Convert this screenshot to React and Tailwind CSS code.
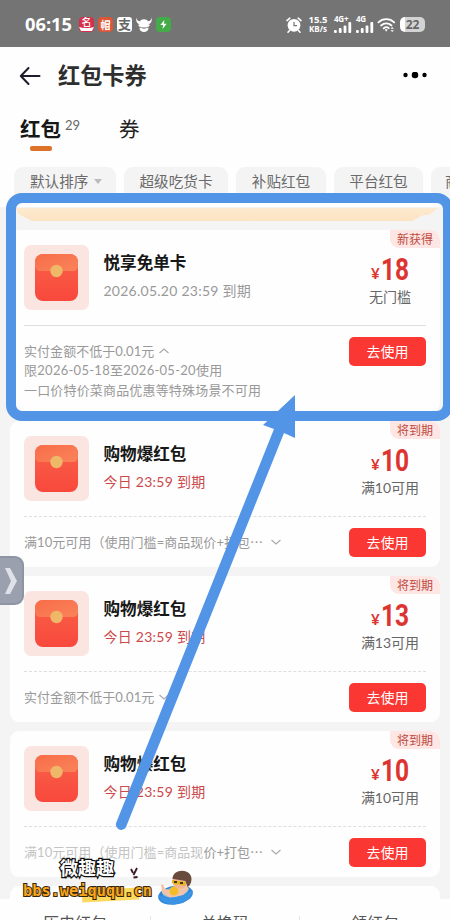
import React from 'react';

const FILTERS = [
    { label: '超级吃货卡', cls: 'w-[104px]' },
    { label: '补贴红包', cls: 'w-[90px]' },
    { label: '平台红包', cls: 'w-[89px]' },
];

const COUPONS = [
    {
        id: 1, tag: '新获得', title: '悦享免单卡', expire: '2026.05.20 23:59 到期', price: '18', limit: '无门槛',
        note: '实付金额不低于0.01元', open: true, cardCls: 'h-[182px]',
        extra: [
            { text: '限2026-05-18至2026-05-20使用', cls: 'tracking-[0.27px]' },
            { text: '一口价特价菜商品优惠等特殊场景不可用', cls: 'tracking-[0.17px]' },
        ],
    },
    {
        id: 2, tag: '将到期', title: '购物爆红包', expire: '今日 23:59 到期', urgent: true, price: '10', limit: '满10可用',
        note: '满10元可用（使用门槛=商品现价+打包⋯', long: true, cardCls: 'h-[146px]',
    },
    {
        id: 3, tag: '将到期', title: '购物爆红包', expire: '今日 23:59 到期', urgent: true, price: '13', limit: '满13可用',
        note: '实付金额不低于0.01元', cardCls: 'h-[146px]',
    },
    {
        id: 4, tag: '将到期', title: '购物爆红包', expire: '今日 23:59 到期', urgent: true, price: '10', limit: '满10可用',
        faded: '满10元可用（使用门槛=商品现', note: '价+打包⋯', long: true, cardCls: 'h-[146px]',
    },
];

const Signal = () => (
    <svg viewBox="0 0 18 11" className="w-[18px] h-[11px]" fill="#fff">
        <rect x="0" y="8" width="2.8" height="3" rx="1" />
        <rect x="4.8" y="6" width="2.8" height="5" rx="1" />
        <rect x="9.6" y="3.5" width="2.8" height="7.5" rx="1" />
        <rect x="14.4" y="0" width="2.8" height="11" rx="1" />
    </svg>
);

const StatusBar = () => (
    <div className="h-[47px] shrink-0 bg-[#747474] flex items-center pt-[2px] pl-[25px] pr-[25px] text-white">
        <span className="w-[54px] text-[18.3px] leading-none font-bold font-['Open_Sans',sans-serif]">06:15</span>
        <div className="flex items-center gap-[4px]">
            <div className="w-[15px] h-[15px] rounded-[4px] bg-[#d62f4c] flex flex-col items-center overflow-hidden">
                <span className="text-[10px] leading-[10px] font-medium">名</span>
                <svg viewBox="0 0 15 4" className="w-[15px] h-[4px]"><path d="M0 0 4 1h7l4-1-2 4H2z" fill="#fff" /></svg>
            </div>
            <div className="w-[15px] h-[15px] rounded-[4px] bg-[#dc5638] flex items-center justify-center text-[10px] leading-none font-bold">帽</div>
            <div className="w-[15px] h-[15px] rounded-[3px] bg-white text-[#666] flex items-center justify-center text-[13px] leading-none font-bold">支</div>
            <svg viewBox="0 0 16 16" className="w-[16px] h-[16px]" fill="#fff">
                <path d="M.5.5C.5 3 2 4 4 4.200 5 1.500 11 1.500 12 4.200 14 4 15.500 3 15.500.5 16.500 4.500 14.500 7 12.500 7.200L14 8c-1 2-3 2.500-6 2.500S3 10 2 8l1.500-.8C1.500 7-.5 4.500.5.5z" />
                <path d="M3.500 10.500c3 1.500 6 1.500 9 0 .5 6-9.500 6-9 0z" />
            </svg>
            <div className="w-[15px] h-[15px] rounded-[4px] bg-[#43ab47] flex items-center justify-center">
                <svg viewBox="0 0 10 10" className="w-[9px] h-[9px]" fill="#fff"><path d="M6 0 1.5 5.5H4.5L4 10 8.5 4.2H5.5z" /></svg>
            </div>
        </div>
        <div className="ml-auto flex items-center">
            <svg viewBox="0 0 16 16" className="w-[16px] h-[16px]">
                <circle cx="8" cy="8.3" r="6.4" fill="#fff" />
                <path d="M1 3.6 3.8 1.2M15 3.6 12.2 1.2M3.5 13.5 2 15.2M12.5 13.5 14 15.2" stroke="#fff" strokeWidth="1.6" strokeLinecap="round" />
                <path d="M8 5v3.6h3" fill="none" stroke="#747474" strokeWidth="1.2" />
            </svg>
            <div className="ml-[6px] w-[20px] flex flex-col items-center font-bold font-['Open_Sans',sans-serif]">
                <span className="text-[9.5px] leading-[8px]">15.5</span>
                <span className="text-[8px] leading-[9px]">KB/s</span>
            </div>
            <div className="ml-[6px] flex flex-col font-bold text-[8px] leading-[7px] tracking-[-0.2px] font-['Open_Sans',sans-serif]">
                <span className="-mt-[2px]">4G+</span>
                <Signal />
            </div>
            <div className="ml-[4px] flex flex-col font-bold text-[8px] leading-[7px] tracking-[-0.2px] font-['Open_Sans',sans-serif]">
                <span className="-mt-[2px]">4G</span>
                <Signal />
            </div>
            <svg viewBox="0 0 20 16" className="ml-[3px] w-[19px] h-[16px]" fill="none" stroke="#fff" strokeWidth="1.9" strokeLinecap="round">
                <path d="M1.5 5.2c4.6-4.4 12-4.4 16.6 0M4.3 8.5c3.2-3 7.8-3 11 0M7 11.5c1.8-1.6 3.8-1.6 5.4-.2" />
                <path d="M8 12.6h3.4L9.7 15z" fill="#fff" stroke="none" />
                <path d="M14.2 12 16 10l1.8 2zM14.2 13.4 16 15.4l1.8-2z" fill="#fff" stroke="none" />
            </svg>
            <div className="ml-[4px] w-[25px] h-[15px] rounded-[5px] bg-gradient-to-r from-white from-20% to-[#d3d3d3] to-20% flex items-center justify-center text-[#666] text-[12px] leading-none font-bold font-['Open_Sans',sans-serif]">22</div>
        </div>
    </div>
);

const Envelope = () => (
    <div className="w-[65px] h-[65px] shrink-0 rounded-[7px] bg-[#fae5e1] flex items-center justify-center">
        <svg viewBox="0 0 43 47" className="w-[43px] h-[47px]">
            <defs>
                <linearGradient id="body" x1="0" y1="0" x2="0" y2="1">
                    <stop offset="0" stopColor="#f9624a" />
                    <stop offset="1" stopColor="#f8483c" />
                </linearGradient>
                <linearGradient id="flap" x1="0" y1="0" x2="1" y2="1">
                    <stop offset="0" stopColor="#f86d48" />
                    <stop offset="1" stopColor="#f9835a" />
                </linearGradient>
            </defs>
            <rect width="43" height="47" rx="8" fill="url(#body)" />
            <path d="M0 8a8 8 0 0 1 8-8h27a8 8 0 0 1 8 8v3c0 4-2 6-6 6H6c-4 0-6-2-6-6z" fill="url(#flap)" />
            <circle cx="21.5" cy="17" r="6.2" fill="#efb868" />
        </svg>
    </div>
);

const CouponCard = ({ item }) => (
    <div className={`relative shrink-0 bg-[#fefefe] rounded-[9px] pl-[14px] pr-[14px] pt-[15px] overflow-hidden ${item.cardCls}`}>
        <div className="absolute right-0 top-0 h-[18px] w-[50px] rounded-bl-[9px] rounded-tr-[9px] bg-[#fde6e3] text-[#c04a40] text-[12px] leading-[19px] text-center">{item.tag}</div>
        <div className="flex h-[65px]">
            <Envelope />
            <div className="ml-[14.500px] flex flex-col">
                <div className="mt-[6px] text-[16.6px] leading-[24px] font-bold text-[#171717]">{item.title}</div>
                <div className={`mt-[6px] text-[14px] leading-[20px] tracking-[0.25px] ${item.urgent ? 'text-[#cd484a]' : 'text-[#999]'}`}>{item.expire}</div>
            </div>
            <div className="ml-auto w-[72px] flex flex-col items-center">
                <div className="mt-[10px] h-[30px] w-[38px] flex items-end text-[#dc3430]">
                    <span className="w-[10px] text-[15px] leading-[24px] font-bold">¥</span>
                    <span className="ml-[1px] w-[28px] origin-left scale-x-[0.79] text-[31px] leading-[30px] font-bold font-['Roboto',sans-serif]">{item.price}</span>
                </div>
                <div className="mt-[2px] text-[14px] leading-[20px] text-[#666]">{item.limit}</div>
            </div>
        </div>
        <div className={`mt-[15px] border-t border-[#dedede] ${item.open ? '' : 'border-dashed'}`} />
        <div className="mt-[11px] flex justify-between">
            <div className="pt-[4px] text-[13px] leading-[20px] tracking-[0.05px] text-[#999] whitespace-nowrap">
                <div className="flex items-center">
                    {item.faded && <span className="text-[#c4c4c4]">{item.faded}</span>}
                    <span>{item.note}</span>
                    <svg viewBox="0 0 10 6" className={`w-[10px] h-[6px] ${item.long ? 'ml-[8px]' : 'ml-[5px]'}`} fill="none" stroke="#aaa" strokeWidth="1.2">
                        <path d={item.open ? 'M.5 5 5 1l4.500 4' : 'M.5 1 5 5l4.500-4'} />
                    </svg>
                </div>
                {item.extra && item.extra.map((line, i) => <div key={i} className={`leading-[19.500px] ${line.cls}`}>{line.text}</div>)}
            </div>
            <button className="w-[77px] h-[29px] shrink-0 rounded-[5px] bg-[#fb3733] text-white text-[14px] leading-[28px]">去使用</button>
        </div>
    </div>
);

// blue frame and arrow drawn over the list
const Markup = () => (
    <>
        <div className="absolute left-[6px] top-[193px] w-[447px] h-[228px] rounded-[16px] border-[10px] border-[#5294e6]" />
        <svg viewBox="0 0 450 920" className="absolute left-0 top-0 w-[450px] h-[920px]">
            <path d="M295 395 263 425l11 4L116.500 822a5.200 5.200 0 0 0 9.500 5L284 433l11 5z" fill="#5294e6" />
        </svg>
    </>
);

const Watermark = () => (
    <div className="absolute left-[23px] top-[855px] w-[175px] h-[60px]">
        <div className="absolute left-[59px] top-[34px] w-[57px] h-[12px] bg-[#fbd95e] -rotate-3" />
        <div className="absolute left-[37px] top-[2px] text-[18px] leading-[22px] font-bold text-white whitespace-nowrap [-webkit-text-stroke:2.5px_#111] [paint-order:stroke_fill]">微趣趣</div>
        <div className="absolute left-0 top-[26px] text-[15.3px] leading-[20px] font-bold text-[#f9a61c] whitespace-nowrap font-['DejaVu_Sans_Mono',monospace] [-webkit-text-stroke:2px_#33250c] [paint-order:stroke_fill]">bbs.weiququ.cn</div>
        <svg viewBox="0 0 10 12" className="absolute left-[107px] top-[12px] w-[10px] h-[12px]" fill="none" stroke="#3a1620" strokeWidth="1.8">
            <path d="M1 2l2 4M7 1 3.500 8M3.500 10.500l4-.5" />
        </svg>
        <svg viewBox="0 0 36 36" className="absolute left-[135px] top-[15px] w-[36px] h-[36px]">
            <ellipse cx="17.500" cy="25" rx="17.500" ry="9.500" fill="#3186d8" transform="rotate(-10 17.500 25)" />
            <ellipse cx="17.500" cy="22" rx="13" ry="5" fill="#78b8ec" transform="rotate(-10 17.500 22)" />
            <path d="M3 15c2-2 3 1 4 4l5 1 5-5 10-2 4 6-6 6-13 3-8-5z" fill="#f3c3a8" />
            <circle cx="16" cy="21" r="4.500" fill="#f4bd27" />
            <circle cx="22" cy="11" r="7.500" fill="#efb596" />
            <path d="M14.500 9c0-11 19-11 19 0 0 4-2 7-4 8l-2-6-12-2z" fill="#694b3e" />
            <path d="M14 10l14 2-1 4-5-1-2-1-2 1-4-2z" fill="#e9b51e" />
            <path d="M16 12h3M22 13h3" stroke="#44351c" strokeWidth="2" />
            <path d="M.5 25c7 4 23 4 34-5 2 14-30 21-34 5z" fill="#3b93e4" />
        </svg>
    </div>
);

export default function App() {
    return (
        <div className="relative w-[450px] h-[920px] overflow-hidden flex flex-col bg-[#fefefe] font-['Lato','Noto_Sans_CJK_SC',sans-serif]">
            <StatusBar />
            <header className="h-[58px] shrink-0 flex items-center pl-[19px] pr-[22px]">
                <svg viewBox="0 0 22 20" className="w-[22px] h-[20px]" fill="none" stroke="#1d1d2b" strokeWidth="2" strokeLinecap="round" strokeLinejoin="round">
                    <path d="M20.500 10H2M9.500 2 1.800 10l7.700 8" />
                </svg>
                <h1 className="ml-[17px] text-[22.2px] leading-none font-bold text-[#2e2e2e]">红包卡券</h1>
                <svg viewBox="0 0 26 8" className="ml-auto w-[26px] h-[8px]">
                    <circle cx="3.500" cy="3" r="2.200" />
                    <circle cx="13" cy="3" r="3.300" />
                    <circle cx="22.500" cy="3" r="2.200" />
                </svg>
            </header>
            <nav className="h-[62px] shrink-0 flex pl-[20px] pt-[12px]">
                <div className="w-[41px] flex flex-col items-center">
                    <span className="text-[20.500px] leading-[24px] font-bold text-[#171717]">红包</span>
                    <span className="mt-[5px] w-[22px] h-[5px] rounded-[2px] bg-[#dc7328]" />
                </div>
                <span className="ml-[4px] w-[54px] text-[13px] leading-[16px] text-[#666]">29</span>
                <span className="text-[20.500px] leading-[24px] text-[#222]">券</span>
            </nav>
            <div className="h-[38px] shrink-0 flex gap-[8px] pl-[14px] overflow-hidden text-[14.600px] leading-[29px] text-[#6a6a6a] whitespace-nowrap">
                <div className="w-[102px] h-[36px] shrink-0 rounded-[9px] bg-[#f4f4f4] pl-[16px] flex">
                    默认排序
                    <svg viewBox="0 0 8 5" className="ml-[6px] mt-[12px] w-[8px] h-[5px]"><path d="M0 0h8L4 5z" fill="#bbb" /></svg>
                </div>
                {FILTERS.map(f => (
                    <div key={f.label} className={`h-[36px] shrink-0 rounded-[9px] bg-[#f4f4f4] text-center ${f.cls}`}>{f.label}</div>
                ))}
                <div className="w-[90px] h-[36px] shrink-0 rounded-[9px] bg-[#f4f4f4] pl-[14px]">商家红包</div>
            </div>
            <main className="flex-1 min-h-0 overflow-hidden bg-[#f4f4f4] px-[10px] flex flex-col">
                <div className="h-[25px] shrink-0 -mx-[10px] pl-[15px] pt-[3px] bg-gradient-to-b from-[#fefefe] from-10% to-[#f4f4f4] to-10%">
                    <div className="w-[423px] h-[13px] bg-gradient-to-b from-[#fdead0] to-[#fce3c2] [clip-path:polygon(0_0,100%_0,98%_50%,96%_60%,94%_100%,4%_100%,1%_50%)]" />
                </div>
                <div className="flex flex-col gap-[9px]">
                    {COUPONS.map(item => <CouponCard key={item.id} item={item} />)}
                    <div className="h-[40px] shrink-0 rounded-[9px] bg-[#fefefe]" />
                </div>
            </main>
            <footer className="h-[21px] shrink-0 bg-[#fefefe] overflow-hidden grid grid-cols-3 pt-[13px] text-[16px] leading-[22px] text-[#555] text-center">
                <span>历史红包</span>
                <span className="border-x border-[#e5e5e5] mt-[4px] -mb-[20px] leading-[14px]">兑换码</span>
                <span>领红包</span>
            </footer>
            <div className="absolute left-0 top-[556px] w-[24px] h-[49px] rounded-r-[9px] bg-[#9ba0af] border-y-2 border-r-2 border-[#8f94a5] flex items-center justify-center">
                <svg viewBox="0 0 14 26" className="w-[14px] h-[26px]"><path d="M1 0h5l7 13-7 13H1l6-13z" fill="#dfe1e8" /></svg>
            </div>
            <Markup />
            <Watermark />
        </div>
    );
}
